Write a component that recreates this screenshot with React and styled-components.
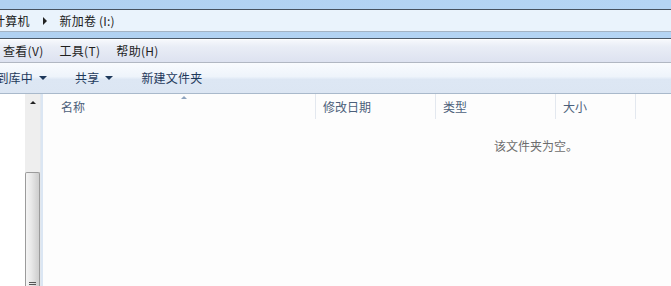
import React from "react";
import styled, { createGlobalStyle } from "styled-components";

const Global = createGlobalStyle`
  html, body { margin: 0; padding: 0; }
  body {
    width: 671px;
    height: 286px;
    overflow: hidden;
    background: #fdfdfd;
    font-family: "Noto Sans CJK SC", "Noto Sans", sans-serif;
    font-size: 12px;
  }
`;

const Window = styled.div`
  width: 671px;
  height: 286px;
  display: flex;
  flex-direction: column;
  overflow: hidden;
`;

const Frame = styled.div`
  background: linear-gradient(to right, #b0d1f1 0, #b5d5f4 100%);
  padding-top: 9px;
  padding-bottom: 6px;
  border-bottom: 1px solid #4d5a68;
`;

const AddressBar = styled.div`
  height: 21px;
  background: #eaf3fc;
  border-top: 1px solid #47525f;
  border-bottom: 1px solid #a4b3c3;
  display: flex;
  align-items: center;
  margin-left: -7px;
  color: #1b1b1b;
  gap: 10px;
`;

const Crumb = styled.span`
  line-height: 1;
  letter-spacing: 0.2px;
`;

const Arrow = styled.span`
  width: 0;
  height: 0;
  border-top: 4px solid transparent;
  border-bottom: 4px solid transparent;
  border-left: 4px solid #222;
  margin: 0 3px;
`;

const MenuBar = styled.div`
  height: 22px;
  border-top: 1px solid #ffffff;
  border-bottom: 1px solid #b1b7c2;
  background: linear-gradient(to bottom, #f6f8fc 0%, #e9edf6 30%, #dde2f0 100%);
  display: flex;
  align-items: center;
  padding-left: 3px;
  gap: 16px;
  color: #1e1e1e;
`;

const MenuItem = styled.span`
  line-height: 1;
  letter-spacing: 0.3px;
`;

const Toolbar = styled.div`
  height: 30px;
  background: linear-gradient(to bottom, #f9fbfe 0%, #eef4fb 45%, #dde7f4 55%, #dce6f3 100%);
  border-bottom: 1px solid #a9b9cb;
  display: flex;
  align-items: center;
  margin-left: -28px;
  gap: 28px;
  color: #1e395b;
`;

const ToolButton = styled.span`
  display: flex;
  align-items: center;
  gap: 6px;
  line-height: 1;
  letter-spacing: 0.2px;
`;

const Caret = styled.span`
  width: 0;
  height: 0;
  border-left: 4px solid transparent;
  border-right: 4px solid transparent;
  border-top: 4px solid #1e395b;
`;

const Body = styled.div`
  flex: 1;
  display: flex;
  background: #fdfdfd;
`;

const NavPane = styled.div`
  width: 25px;
  background: #ffffff;
`;

const ScrollBar = styled.div`
  width: 15px;
  display: flex;
  flex-direction: column;
  background: #eeeeee;
  border-right: 1px solid #e3e8ee;
`;

const ScrollUp = styled.div`
  height: 17px;
  display: flex;
  justify-content: center;
  align-items: center;
  &::after {
    content: "";
    border-left: 3px solid transparent;
    border-right: 3px solid transparent;
    border-bottom: 3px solid #222;
  }
`;

const ScrollGap = styled.div`
  height: 61px;
`;

const Thumb = styled.div`
  flex: 1;
  border: 1px solid #9b9b9b;
  border-bottom: none;
  border-radius: 2px 2px 0 0;
  background: linear-gradient(to right, #f4f4f4 0%, #e9e9e9 40%, #d6d6d6 80%, #cfcfcf 100%);
  display: flex;
  justify-content: center;
  align-items: flex-end;
`;

const Grip = styled.div`
  width: 7px;
  height: 6px;
  margin-bottom: -2px;
  background: repeating-linear-gradient(to bottom, #555 0, #555 1px, transparent 1px, transparent 2px);
`;

const Splitter = styled.div`
  width: 2px;
  background: #dbe6f3;
`;

const Content = styled.div`
  flex: 1;
  display: flex;
  flex-direction: column;
`;

const Header = styled.div`
  height: 25px;
  display: flex;
  color: #4c607a;
`;

const Column = styled.div`
  width: ${(p) => p.$w}px;
  position: relative;
  padding-left: ${(p) => p.$pad || 7}px;
  border-right: 1px solid #e3e8ef;
  display: flex;
  align-items: center;
  box-sizing: border-box;
  padding-bottom: 1px;
`;

const SortArrow = styled.span`
  position: absolute;
  left: 138px;
  top: 2px;
  border-left: 3px solid transparent;
  border-right: 3px solid transparent;
  border-bottom: 3px solid #8ea3be;
`;

const Empty = styled.div`
  padding-top: 21px;
  padding-left: 451px;
  color: #6d6d6d;
  line-height: 1;
`;

export default function App() {
  return (
    <Window>
      <Global />
      <Frame>
        <AddressBar>
          <Crumb>计算机</Crumb>
          <Arrow />
          <Crumb>新加卷 (I:)</Crumb>
        </AddressBar>
      </Frame>
      <MenuBar>
        <MenuItem>查看(V)</MenuItem>
        <MenuItem>工具(T)</MenuItem>
        <MenuItem>帮助(H)</MenuItem>
      </MenuBar>
      <Toolbar>
        <ToolButton>
          包含到库中 <Caret />
        </ToolButton>
        <ToolButton>
          共享 <Caret />
        </ToolButton>
        <ToolButton>新建文件夹</ToolButton>
      </Toolbar>
      <Body>
        <NavPane />
        <ScrollBar>
          <ScrollUp />
          <ScrollGap />
          <Thumb>
            <Grip />
          </Thumb>
        </ScrollBar>
        <Splitter />
        <Content>
          <Header>
            <Column $w={273} $pad={18}>
              名称
              <SortArrow />
            </Column>
            <Column $w={120}>修改日期</Column>
            <Column $w={120}>类型</Column>
            <Column $w={80}>大小</Column>
          </Header>
          <Empty>该文件夹为空。</Empty>
        </Content>
      </Body>
    </Window>
  );
}
